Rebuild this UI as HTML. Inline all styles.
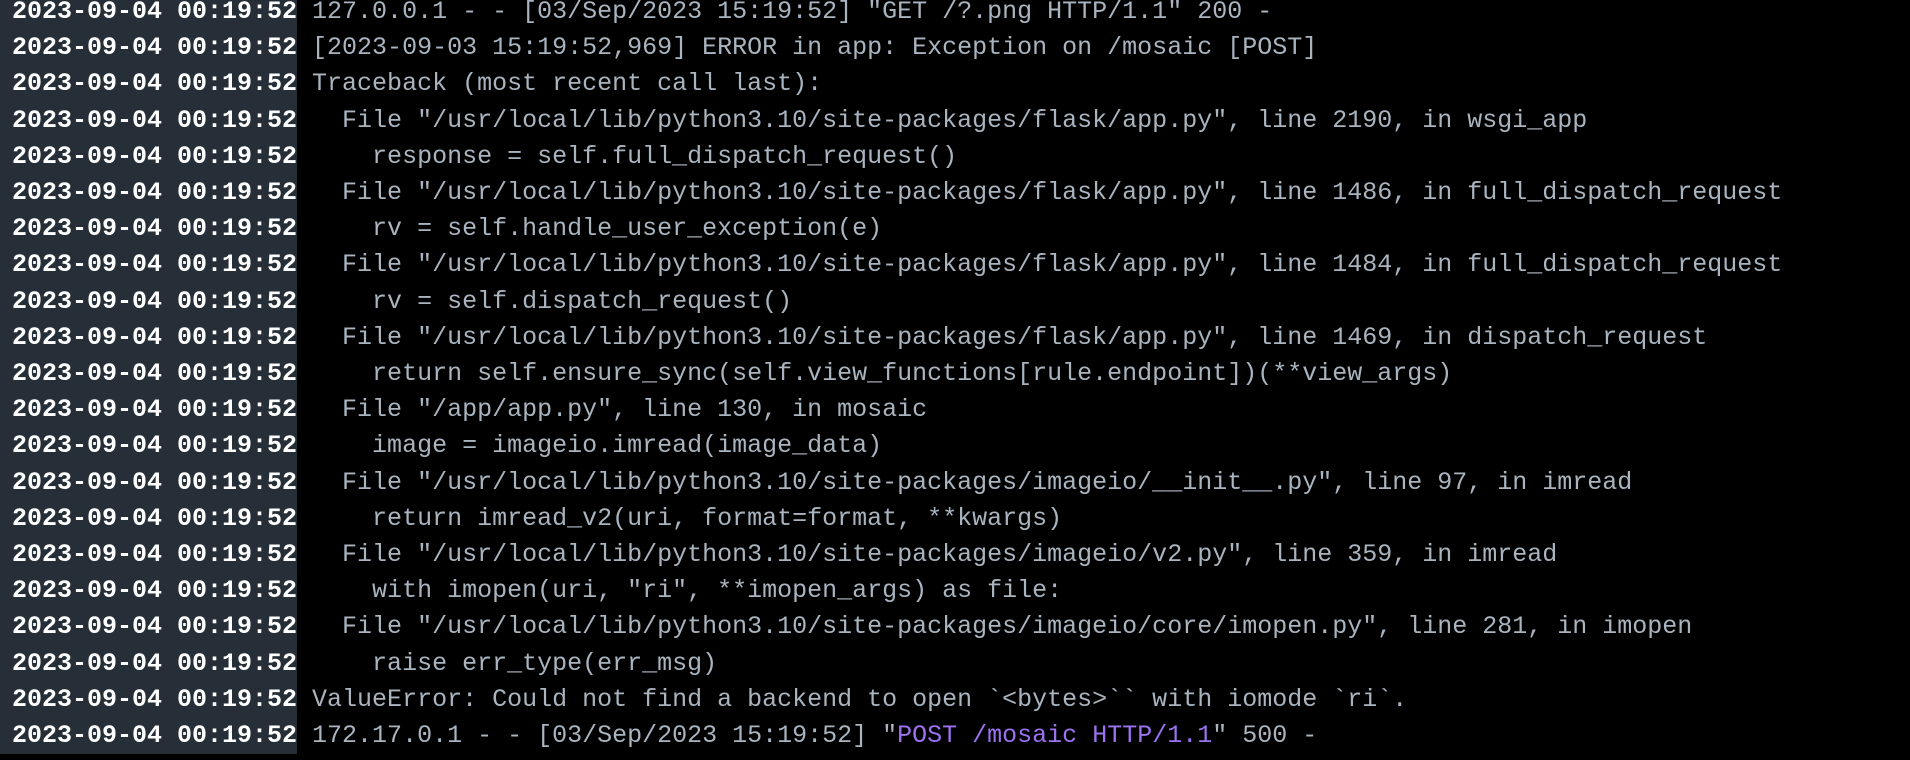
<!DOCTYPE html>
<html><head><meta charset="utf-8"><style>
html,body{margin:0;padding:0;background:#000;width:1910px;height:760px;overflow:hidden}
pre{margin:0;position:absolute;left:12px;top:-6px;font-family:"Liberation Mono","DejaVu Sans Mono",monospace;font-size:25px;line-height:36.2px;color:#a9b4bf;white-space:pre}
.t{background:#262f38;color:#fff;font-weight:bold;box-shadow:0 0 0 0 #262f38;display:inline-block;height:36.2px;padding-left:12px;margin-left:-12px}
.p{color:#9b72f0}
</style></head><body><pre><span class="t">2023-09-04 00:19:52</span> 127.0.0.1 - - [03/Sep/2023 15:19:52] "GET /?.png HTTP/1.1" 200 -
<span class="t">2023-09-04 00:19:52</span> [2023-09-03 15:19:52,969] ERROR in app: Exception on /mosaic [POST]
<span class="t">2023-09-04 00:19:52</span> Traceback (most recent call last):
<span class="t">2023-09-04 00:19:52</span>   File "/usr/local/lib/python3.10/site-packages/flask/app.py", line 2190, in wsgi_app
<span class="t">2023-09-04 00:19:52</span>     response = self.full_dispatch_request()
<span class="t">2023-09-04 00:19:52</span>   File "/usr/local/lib/python3.10/site-packages/flask/app.py", line 1486, in full_dispatch_request
<span class="t">2023-09-04 00:19:52</span>     rv = self.handle_user_exception(e)
<span class="t">2023-09-04 00:19:52</span>   File "/usr/local/lib/python3.10/site-packages/flask/app.py", line 1484, in full_dispatch_request
<span class="t">2023-09-04 00:19:52</span>     rv = self.dispatch_request()
<span class="t">2023-09-04 00:19:52</span>   File "/usr/local/lib/python3.10/site-packages/flask/app.py", line 1469, in dispatch_request
<span class="t">2023-09-04 00:19:52</span>     return self.ensure_sync(self.view_functions[rule.endpoint])(**view_args)
<span class="t">2023-09-04 00:19:52</span>   File "/app/app.py", line 130, in mosaic
<span class="t">2023-09-04 00:19:52</span>     image = imageio.imread(image_data)
<span class="t">2023-09-04 00:19:52</span>   File "/usr/local/lib/python3.10/site-packages/imageio/__init__.py", line 97, in imread
<span class="t">2023-09-04 00:19:52</span>     return imread_v2(uri, format=format, **kwargs)
<span class="t">2023-09-04 00:19:52</span>   File "/usr/local/lib/python3.10/site-packages/imageio/v2.py", line 359, in imread
<span class="t">2023-09-04 00:19:52</span>     with imopen(uri, "ri", **imopen_args) as file:
<span class="t">2023-09-04 00:19:52</span>   File "/usr/local/lib/python3.10/site-packages/imageio/core/imopen.py", line 281, in imopen
<span class="t">2023-09-04 00:19:52</span>     raise err_type(err_msg)
<span class="t">2023-09-04 00:19:52</span> ValueError: Could not find a backend to open `&lt;bytes&gt;`` with iomode `ri`.
<span class="t">2023-09-04 00:19:52</span> 172.17.0.1 - - [03/Sep/2023 15:19:52] "<span class="p">POST /mosaic HTTP/1.1</span>" 500 -</pre></body></html>
